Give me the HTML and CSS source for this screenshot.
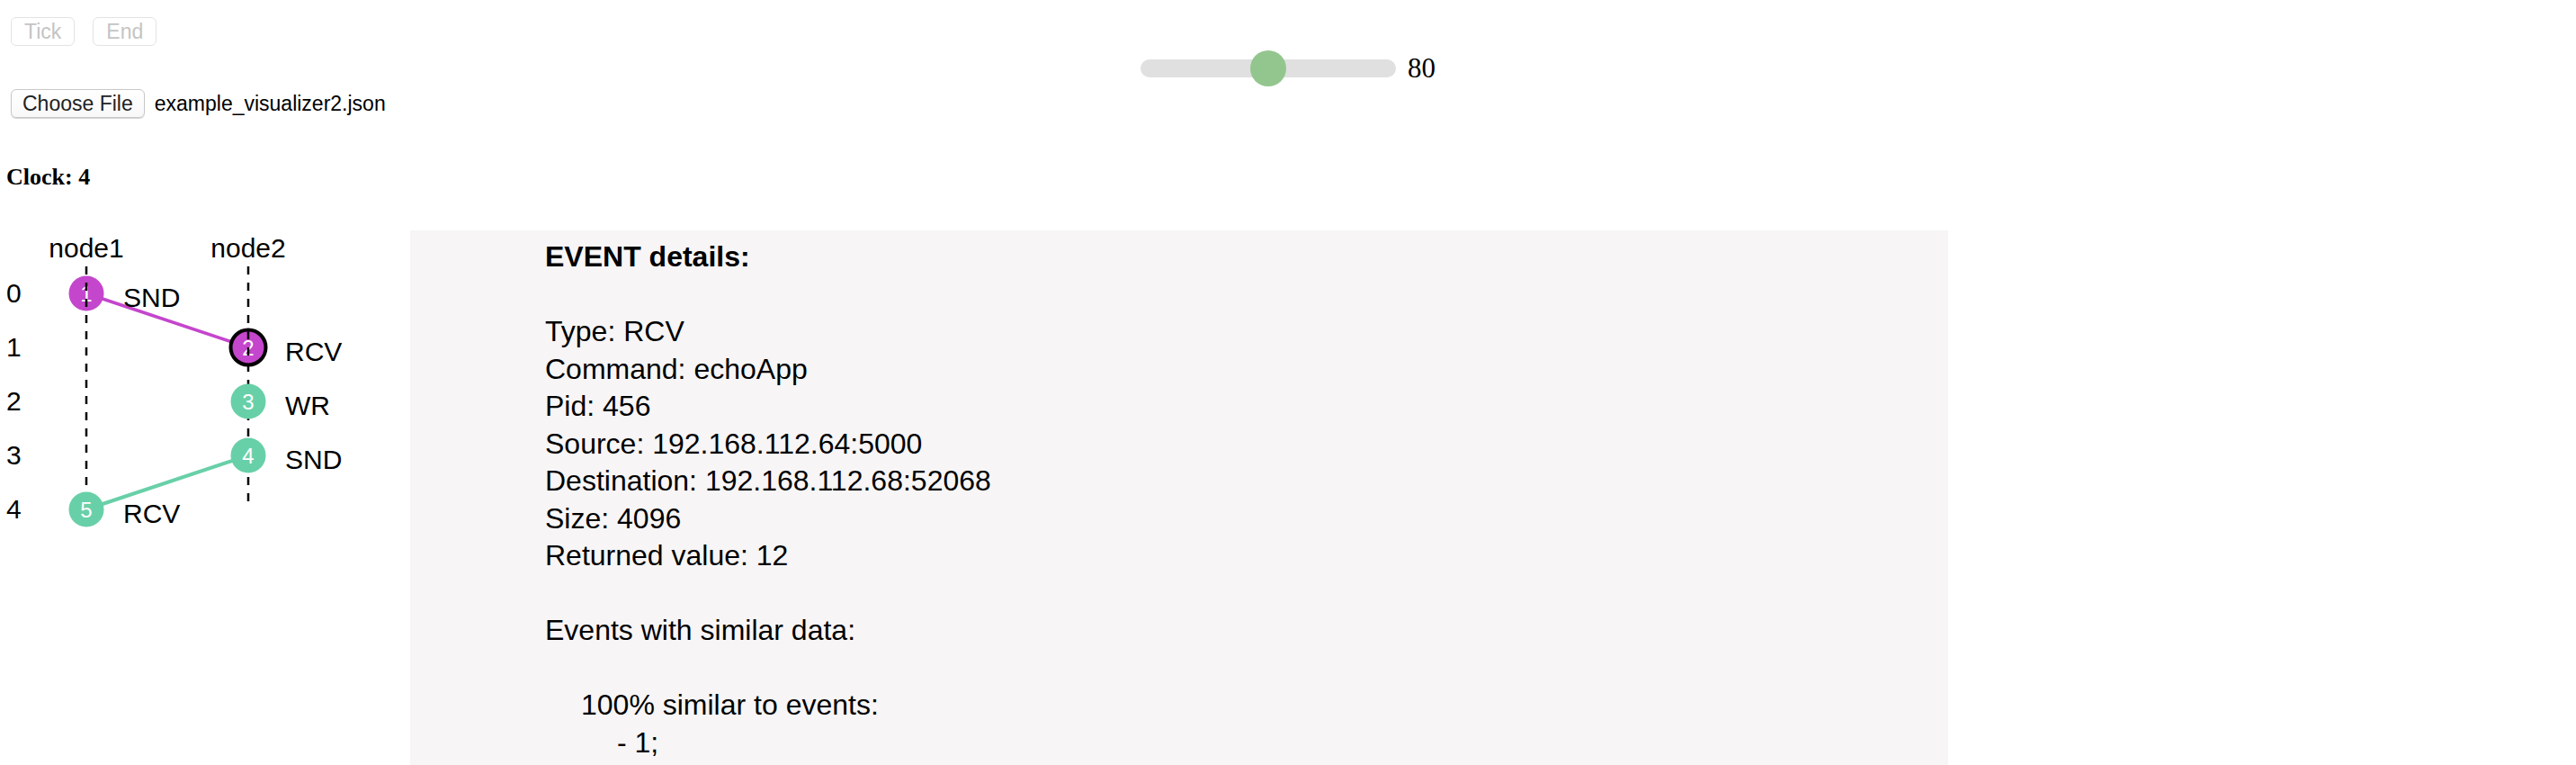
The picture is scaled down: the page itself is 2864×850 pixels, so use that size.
FILE: index.html
```html
<!DOCTYPE html>
<html lang="en">
<head>
<meta charset="utf-8">
<title>Event visualizer</title>
<link rel="stylesheet" href="styles.css">
</head>
<body>
<header class="controls">
  <div class="left">
    <div class="btn-row">
      <button class="btn" disabled>Tick</button>
      <button class="btn" disabled>End</button>
    </div>
    <div class="file-row">
      <button class="file-btn">Choose File</button>
      <span class="file-name">example_visualizer2.json</span>
    </div>
  </div>
  <div class="speed">
    <input class="slider" type="range" min="10" max="150" value="80">
    <span class="speed-value">80</span>
  </div>
  <div class="spacer"></div>
</header>

<h4 class="clock">Clock: 4</h4>

<main class="view">
  <svg class="graph" width="456" height="594" viewBox="0 0 456 594">
    <g class="labels">
      <text x="96" y="30" text-anchor="middle">node1</text>
      <text x="276" y="30" text-anchor="middle">node2</text>
      <text x="7" y="80">0</text>
      <text x="7" y="140">1</text>
      <text x="7" y="200">2</text>
      <text x="7" y="260">3</text>
      <text x="7" y="320">4</text>
    </g>
    <line x1="96" y1="70" x2="276" y2="130" stroke="#c446cc" stroke-width="3.5"/>
    <line x1="276" y1="250" x2="96" y2="310" stroke="#68d0a8" stroke-width="4"/>
    <circle cx="96" cy="70" r="19.5" fill="#c446cc"/>
    <text class="num" x="96" y="78.5" text-anchor="middle">1</text>
    <circle cx="276" cy="130" r="19.5" fill="#c446cc" stroke="#000" stroke-width="4"/>
    <text class="num" x="276" y="138.5" text-anchor="middle">2</text>
    <line x1="96" y1="40" x2="96" y2="300" stroke="#000" stroke-width="2.5" stroke-dasharray="9 9"/>
    <line x1="276" y1="40" x2="276" y2="310" stroke="#000" stroke-width="2.5" stroke-dasharray="9 9"/>
    <circle cx="276" cy="190" r="19.5" fill="#68d0a8"/>
    <text class="num" x="276" y="198.5" text-anchor="middle">3</text>
    <circle cx="276" cy="250" r="19.5" fill="#68d0a8"/>
    <text class="num" x="276" y="258.5" text-anchor="middle">4</text>
    <circle cx="96" cy="310" r="19.5" fill="#68d0a8"/>
    <text class="num" x="96" y="318.5" text-anchor="middle">5</text>
    <g class="labels">
      <text x="137" y="85">SND</text>
      <text x="317" y="145">RCV</text>
      <text x="317" y="205">WR</text>
      <text x="317" y="265">SND</text>
      <text x="137" y="325">RCV</text>
    </g>
  </svg>

  <section class="details">
    <h3 class="details-title">EVENT details:</h3>
    <div class="fields">
      <div>Type: RCV</div>
      <div>Command: echoApp</div>
      <div>Pid: 456</div>
      <div>Source: 192.168.112.64:5000</div>
      <div>Destination: 192.168.112.68:52068</div>
      <div>Size: 4096</div>
      <div>Returned value: 12</div>
    </div>
    <div class="similar-title">Events with similar data:</div>
    <div class="similar">
      <div>100% similar to events:</div>
      <div class="similar-ref">- 1;</div>
    </div>
  </section>
</main>
</body>
</html>
```
FILE: styles.css
```css
html, body {
  margin: 0;
  padding: 0;
  background: #fff;
}

body {
  font-family: "Liberation Sans", Arial, Helvetica, sans-serif;
  color: #000;
  overflow: hidden;
}

.controls {
  display: grid;
  grid-template-columns: 1fr auto 1fr;
  align-items: center;
  padding-top: 19px;
}

.left {
  padding-left: 12px;
}

.btn-row {
  display: flex;
  gap: 20px;
}

.btn,
.file-btn {
  box-sizing: border-box;
  height: 32px;
  font-family: "Liberation Sans", Arial, sans-serif;
  font-size: 23px;
  line-height: 30px;
  border-radius: 6px;
  background: #fff;
  margin: 0;
}

.btn {
  padding: 0 14px;
  border: 1px solid #e3e3e3;
  color: #c4c4c4;
}

.file-row {
  display: flex;
  align-items: center;
  margin-top: 48px;
}

.file-btn {
  padding: 0 12px;
  border: 1px solid #c8c8c8;
  color: #222;
  background: linear-gradient(#ffffff, #f8f8f8);
  box-shadow: 0 1px 1px rgba(0, 0, 0, 0.18);
}

.file-name {
  margin-left: 11px;
  font-size: 23px;
}

.speed {
  display: flex;
  align-items: center;
  gap: 13px;
  margin-top: 2px;
}

.slider {
  -webkit-appearance: none;
  appearance: none;
  width: 284px;
  height: 20px;
  margin: 0;
  border-radius: 10px;
  background: #e0e0e0;
  outline: none;
}

.slider::-webkit-slider-thumb {
  -webkit-appearance: none;
  appearance: none;
  width: 40px;
  height: 40px;
  border-radius: 50%;
  background: #93c68e;
  border: none;
}

.speed-value {
  font-family: "Liberation Serif", "Times New Roman", serif;
  font-size: 31px;
  line-height: 30px;
}

.clock {
  margin: 51px 0 44px 7px;
  font-family: "Liberation Serif", "Times New Roman", serif;
  font-weight: bold;
  font-size: 26px;
  line-height: 30px;
}

.view {
  display: flex;
  align-items: flex-start;
}

.graph {
  flex: none;
  display: block;
}

.graph .labels text {
  font-family: "Liberation Sans", Arial, sans-serif;
  font-size: 30px;
  fill: #000;
}

.graph .num {
  font-family: "Liberation Sans", Arial, sans-serif;
  font-size: 24px;
  fill: #fff;
}

.details {
  flex: none;
  width: 1710px;
  height: 594px;
  overflow: hidden;
  box-sizing: border-box;
  padding: 9px 0 0 150px;
  background: #f7f5f6;
  font-size: 32px;
  line-height: 41.5px;
}

.details-title {
  margin: 0 0 41.5px;
  font-size: 32px;
  font-weight: bold;
  line-height: 41.5px;
}

.fields {
  margin-bottom: 41.5px;
}

.similar-title {
  margin-bottom: 41.5px;
}

.similar {
  padding-left: 40px;
}

.similar-ref {
  padding-left: 40px;
}
```
